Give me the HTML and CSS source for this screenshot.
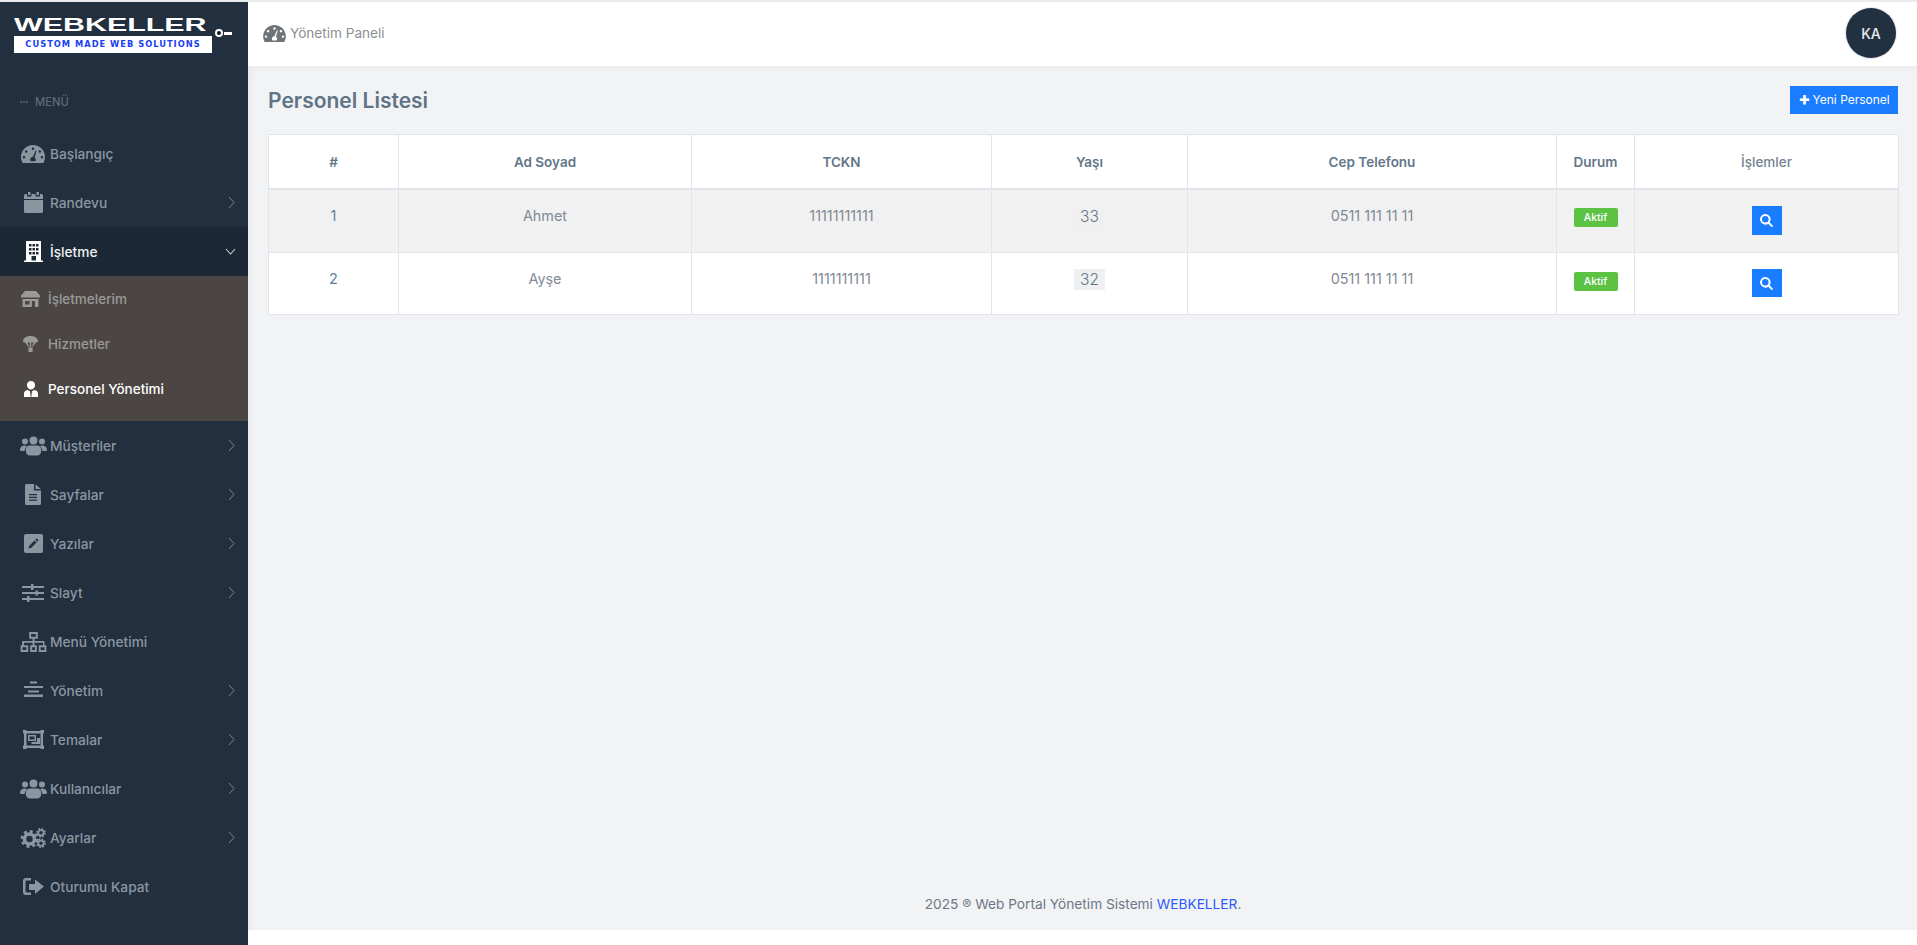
FILE: index.html
```html
<!DOCTYPE html>
<html lang="tr">
<head>
<meta charset="utf-8">
<title>Personel Listesi</title>
<link rel="stylesheet" href="styles.css">
</head>
<body>
<svg class="defs" width="0" height="0" aria-hidden="true">
  <defs>
    <symbol id="i-gauge" viewBox="0 0 24 18"><path fill-rule="evenodd" d="M12 0C5.400 0 0 5.300 0 12c0 2.200.6 4.200 1.600 6h20.800c1-1.800 1.600-3.800 1.600-6 0-6.700-5.400-12-12-12zM12 2.400a1.300 1.300 0 1 1 0 2.600 1.300 1.300 0 0 1 0-2.600zM5.200 5.200a1.300 1.300 0 1 1 0 2.600 1.300 1.300 0 0 1 0-2.600zM18.800 5.200a1.300 1.300 0 1 1 0 2.600 1.300 1.300 0 0 1 0-2.600zM3 11a1.300 1.300 0 1 1 0 2.600A1.300 1.300 0 0 1 3 11zM21 11a1.300 1.300 0 1 1 0 2.600 1.300 1.300 0 0 1 0-2.600zM14.600 5.500l.9.300-1.900 6.600c.7.500 1.200 1.300 1.200 2.200 0 .7-.3 1.300-.7 1.700H9.900c-.4-.4-.7-1-.7-1.700 0-1.500 1.200-2.700 2.700-2.800z"/></symbol>
    <symbol id="i-calendar" viewBox="0 0 19 21"><path d="M4 0h2.500v3H4zM12.500 0H15v3h-2.500zM1.500 2H3v2.500h4.500V2h4v2.500H16V2h1.500A1.500 1.500 0 0 1 19 3.500V7H0V3.500A1.500 1.500 0 0 1 1.500 2zM0 8h19v11.500a1.500 1.500 0 0 1-1.500 1.500h-16A1.500 1.500 0 0 1 0 19.500z"/></symbol>
    <symbol id="i-building" viewBox="0 0 19 21"><path fill-rule="evenodd" d="M2 0h15v19.500h2V21H0v-1.500h2zM5 3v2.500h2.500V3zM8.500 3v2.500H11V3zM12 3v2.500h2.500V3zM5 7v2.500h2.500V7zM8.500 7v2.500H11V7zM12 7v2.500h2.500V7zM5 11v2.500h2.500V11zM8.500 11v2.500H11V11zM12 11v2.500h2.500V11zM7.500 15v4.500H12V15z"/></symbol>
    <symbol id="i-shop" viewBox="0 0 19 16"><path fill-rule="evenodd" d="M4 0h11l4 4.500V6.500H0V4.500zM1.500 8h16v8h-3.600V10h-3v6H1.500zM4 10v3.500h4.500V10z"/></symbol>
    <symbol id="i-para" viewBox="0 0 16 17"><path fill-rule="evenodd" d="M8 0c4.400 0 8 2.300 8 5.300 0 .8-.3 1.300-.8 1.300h-.9L9.800 11.800h-.6L11.300 7H4.700l2.100 4.800h-.6L1.700 6.600H.8C.3 6.600 0 6.100 0 5.300 0 2.300 3.600 0 8 0zM7.300 7h1.400v4.800H7.300zM5.800 12.300h4.400V17H5.800z"/></symbol>
    <symbol id="i-person" viewBox="0 0 14 16"><path d="M7 0a4 4 0 0 1 4 4.500C11 6.800 9.200 8.500 7 8.500S3 6.800 3 4.500A4 4 0 0 1 7 0zM3.500 9 6 10.300 6.700 16H0v-3.500C0 10.500 1.700 9.300 3.500 9zM10.500 9c1.800.3 3.500 1.500 3.500 3.500V16H7.300L8 10.300z"/></symbol>
    <symbol id="i-users" viewBox="0 0 27 19"><path d="M13.500 0a4 4 0 1 1 0 8 4 4 0 0 1 0-8zM5 2a3 3 0 1 1 0 6 3 3 0 0 1 0-6zM22 2a3 3 0 1 1 0 6 3 3 0 0 1 0-6zM4.500 9c1 0 1.800.3 2.500.8-1.400 1.200-2.200 2.900-2.400 4.700H1.500C.6 14.500 0 14 0 13c0-2.200 2-4 4.500-4zM22.500 9C25 9 27 10.800 27 13c0 1-.6 1.500-1.500 1.500h-3.100c-.2-1.800-1-3.500-2.400-4.700.7-.5 1.500-.8 2.500-.8zM9.500 9h8c2.200 0 3.800 2 3.800 5 0 3-1.800 5-4.300 5H10c-2.500 0-4.300-2-4.300-5 0-3 1.600-5 3.800-5z"/></symbol>
    <symbol id="i-file" viewBox="0 0 16 21"><path fill-rule="evenodd" d="M1.500 0H9v6.500h7v13a1.500 1.500 0 0 1-1.500 1.500h-13A1.500 1.500 0 0 1 0 19.500v-18A1.500 1.500 0 0 1 1.500 0zM10.500.3 15.800 5h-5.300zM4 10v1.300h8V10zM4 12.700V14h8v-1.300zM4 15.400v1.300h8v-1.300z"/></symbol>
    <symbol id="i-edit" viewBox="0 0 19 19"><path fill-rule="evenodd" d="M2 0h15a2 2 0 0 1 2 2v15a2 2 0 0 1-2 2H2a2 2 0 0 1-2-2V2a2 2 0 0 1 2-2zM10.500 6.500 5 12l-.5 2.500 2.500-.5 5.500-5.500zM11.300 5.700l2 2 .7-.7a1 1 0 0 0 0-1.400l-.6-.6a1 1 0 0 0-1.400 0z"/></symbol>
    <symbol id="i-sliders" viewBox="0 0 22 18"><path d="M0 2h9V0h2.500v2H22v2H11.500v2H9V4H0zM0 8h13.500V6.500H16V8h6v2h-6v1.500h-2.500V10H0zM0 14h5v-2h2.500v2H22v2H7.500v2H5v-2H0z"/></symbol>
    <symbol id="i-sitemap" viewBox="0 0 27 21"><path fill-rule="evenodd" d="M9 0h9v7h-3.500v2.500H25V14h2v7h-8v-7h4.500v-2.800h-9V14H17v7H10v-7h2.500v-2.800h-9V14H8v7H0v-7h1.500V9.500h11V7H9zM11 2v3h5V2zM2 16v3h4v-3zM12 16v3h3v-3zM21 16v3h4v-3z"/></symbol>
    <symbol id="i-align" viewBox="0 0 19 18"><path d="M6 0h7v2H6zM0 4.500h19v2H0zM4 9h11v2H4zM0 13h19v2.500H0z"/></symbol>
    <symbol id="i-group" viewBox="0 0 21 19"><path fill-rule="evenodd" d="M0 0h3.500v1H17.500V0H21v3.500h-1v12h1V19h-3.500v-1h-14v1H0v-3.500h1v-12H0zM3.500 3.500v12h14v-12zM5 5h8v6H5zM6.500 6.500v3h5v-3zM14 8h3v6H8.500v-2H14z"/></symbol>
    <symbol id="i-cogs" viewBox="0 0 26 20">
      <g fill="none" stroke="currentColor">
        <circle cx="9" cy="11" r="5" stroke-width="3.600"/>
        <circle cx="9" cy="11" r="7.600" stroke-width="2.800" stroke-dasharray="3 2.970"/>
        <circle cx="20.500" cy="4.800" r="2.700" stroke-width="1.800"/>
        <circle cx="20.500" cy="4.800" r="4" stroke-width="1.700" stroke-dasharray="1.700 1.440"/>
        <circle cx="20.500" cy="15.200" r="2.700" stroke-width="1.800"/>
        <circle cx="20.500" cy="15.200" r="4" stroke-width="1.700" stroke-dasharray="1.700 1.440"/>
      </g>
    </symbol>
    <symbol id="i-signout" viewBox="0 0 21 17"><path d="M3 0h5v2.500H3.500a1 1 0 0 0-1 1v10a1 1 0 0 0 1 1H8V17H3a3 3 0 0 1-3-3V3a3 3 0 0 1 3-3zM12 1.500l9 7-9 7.500v-4H6V6h6z"/></symbol>
    <symbol id="i-search" viewBox="0 0 13 13"><path fill-rule="evenodd" d="M5.300 0a5.300 5.300 0 0 1 4.300 8.300l3.100 3.100a1 1 0 0 1-1.400 1.400L8.300 9.700A5.300 5.300 0 1 1 5.300 0zm0 2a3.300 3.300 0 1 0 0 6.600 3.300 3.300 0 0 0 0-6.600z"/></symbol>
  </defs>
</svg>
<div class="app">
  <aside class="sidebar">
    <div class="logo">
      <div class="logo-name">WEBKELLER</div>
      <div class="logo-tag">CUSTOM MADE WEB SOLUTIONS</div>
      <span class="logo-key"><span class="logo-ring"></span><span class="logo-bar"></span></span>
    </div>
    <div class="menu-label"><span class="dots"><i></i><i></i><i></i></span>MENÜ</div>
    <nav class="menu">
      <a class="item"><span class="ico"><svg class="g24"><use href="#i-gauge"/></svg></span><span class="lbl">Başlangıç</span></a>
      <a class="item"><span class="ico"><svg class="g19"><use href="#i-calendar"/></svg></span><span class="lbl">Randevu</span><svg class="chev" viewBox="0 0 7 13"><path d="M1 1l5 5.500-5 5.500"/></svg></a>
      <a class="item active"><span class="ico"><svg class="g19"><use href="#i-building"/></svg></span><span class="lbl">İşletme</span><svg class="chevd" viewBox="0 0 11 7"><path d="M1 1l4.500 5L10 1"/></svg></a>
      <div class="submenu">
        <a class="subitem"><span class="subico"><svg class="s19"><use href="#i-shop"/></svg></span>İşletmelerim</a>
        <a class="subitem"><span class="subico"><svg class="s16"><use href="#i-para"/></svg></span>Hizmetler</a>
        <a class="subitem current"><span class="subico"><svg class="s14"><use href="#i-person"/></svg></span>Personel Yönetimi</a>
      </div>
      <a class="item"><span class="ico"><svg class="g27"><use href="#i-users"/></svg></span><span class="lbl">Müşteriler</span><svg class="chev" viewBox="0 0 7 13"><path d="M1 1l5 5.500-5 5.500"/></svg></a>
      <a class="item"><span class="ico"><svg class="g16"><use href="#i-file"/></svg></span><span class="lbl">Sayfalar</span><svg class="chev" viewBox="0 0 7 13"><path d="M1 1l5 5.500-5 5.500"/></svg></a>
      <a class="item"><span class="ico"><svg class="g19"><use href="#i-edit"/></svg></span><span class="lbl">Yazılar</span><svg class="chev" viewBox="0 0 7 13"><path d="M1 1l5 5.500-5 5.500"/></svg></a>
      <a class="item"><span class="ico"><svg class="g22"><use href="#i-sliders"/></svg></span><span class="lbl">Slayt</span><svg class="chev" viewBox="0 0 7 13"><path d="M1 1l5 5.500-5 5.500"/></svg></a>
      <a class="item"><span class="ico"><svg class="g27"><use href="#i-sitemap"/></svg></span><span class="lbl">Menü Yönetimi</span></a>
      <a class="item"><span class="ico"><svg class="g19"><use href="#i-align"/></svg></span><span class="lbl">Yönetim</span><svg class="chev" viewBox="0 0 7 13"><path d="M1 1l5 5.500-5 5.500"/></svg></a>
      <a class="item"><span class="ico"><svg class="g21"><use href="#i-group"/></svg></span><span class="lbl">Temalar</span><svg class="chev" viewBox="0 0 7 13"><path d="M1 1l5 5.500-5 5.500"/></svg></a>
      <a class="item"><span class="ico"><svg class="g27"><use href="#i-users"/></svg></span><span class="lbl">Kullanıcılar</span><svg class="chev" viewBox="0 0 7 13"><path d="M1 1l5 5.500-5 5.500"/></svg></a>
      <a class="item"><span class="ico"><svg class="g27"><use href="#i-cogs"/></svg></span><span class="lbl">Ayarlar</span><svg class="chev" viewBox="0 0 7 13"><path d="M1 1l5 5.500-5 5.500"/></svg></a>
      <a class="item"><span class="ico"><svg class="g21"><use href="#i-signout"/></svg></span><span class="lbl">Oturumu Kapat</span></a>
    </nav>
  </aside>
  <div class="main">
    <header class="topbar">
      <div class="crumb"><svg class="crumb-ico"><use href="#i-gauge"/></svg><span>Yönetim Paneli</span></div>
      <div class="avatar">KA</div>
    </header>
    <main class="content">
      <div class="title-row">
        <h1>Personel Listesi</h1>
        <a class="new-btn"><span class="plus">+</span>Yeni Personel</a>
      </div>
      <table class="grid">
        <colgroup><col class="c1"><col class="c2"><col class="c3"><col class="c4"><col class="c5"><col class="c6"><col class="c7"></colgroup>
        <thead>
          <tr><th>#</th><th>Ad Soyad</th><th>TCKN</th><th>Yaşı</th><th>Cep Telefonu</th><th>Durum</th><th class="light">İşlemler</th></tr>
        </thead>
        <tbody>
          <tr class="odd"><td class="num">1</td><td>Ahmet</td><td>11111111111</td><td><code>33</code></td><td>0511 111 11 11</td><td><span class="badge">Aktif</span></td><td><a class="view"><svg><use href="#i-search"/></svg></a></td></tr>
          <tr class="even"><td class="num">2</td><td>Ayşe</td><td>1111111111</td><td><code>32</code></td><td>0511 111 11 11</td><td><span class="badge">Aktif</span></td><td><a class="view"><svg><use href="#i-search"/></svg></a></td></tr>
        </tbody>
      </table>
      <footer class="foot">2025 ® Web Portal Yönetim Sistemi <a>WEBKELLER</a>.</footer>
    </main>
  </div>
</div>
</body>
</html>
```
FILE: styles.css
```css
* { box-sizing: border-box; }
html, body { margin: 0; height: 100%; }
body { font-family: Inter, "Liberation Sans", sans-serif; background: #fff; color: #67757c; overflow: hidden; }
.defs { position: absolute; }
.app { display: flex; height: 945px; border-top: 2px solid #e8eaec; }
.sidebar { width: 248px; flex: none; background: #212f3f; }
.logo { position: relative; height: 64px; padding: 15px 0 0 14px; }
.logo-name { width: 198px; height: 16px; color: #fff; font: 700 19px/16px "Liberation Sans", sans-serif; transform-origin: 0 50%; transform: scaleX(1.6); white-space: nowrap; }
.logo-tag { width: 198px; height: 17px; margin-top: 3px; background: #fff; color: #1a3ff0; font: 700 8.300px/17px "DejaVu Sans", sans-serif; letter-spacing: 1px; text-align: center; white-space: nowrap; }
.logo-key { position: absolute; left: 215px; top: 27px; display: flex; align-items: center; }
.logo-ring { width: 8px; height: 8px; border: 2px solid #fff; border-radius: 50%; background: #10161d; }
.logo-bar { width: 8px; height: 3px; background: #fff; margin-left: 1px; }
.menu-label { display: flex; align-items: center; height: 63px; padding: 9px 0 0 20px; font-size: 11.200px; font-weight: 500; line-height: 18px; color: #5e6a76; }
.dots { display: flex; gap: 1px; margin-right: 7px; }
.dots i { width: 2px; height: 2px; border-radius: 50%; background: #5e6a76; }
.menu { display: flex; flex-direction: column; }
.item { display: flex; align-items: center; height: 49px; padding-left: 18px; padding-right: 13px; color: #8c96a1; font-size: 13.700px; font-weight: 500; }
.item svg { fill: #8c96a1; }
.ico { width: 30px; margin-right: 2px; display: flex; justify-content: center; align-items: center; }
.lbl { flex: 1; }
.g16 { width: 16px; height: 21px; }
.g19 { width: 19px; height: 21px; }
.g21 { width: 21px; height: 19px; }
.g22 { width: 22px; height: 18px; }
.g24 { width: 24px; height: 18px; }
.g27 { width: 27px; height: 20px; }
.chev { width: 7px; height: 13px; fill: none !important; stroke: #79848f; stroke-width: 1; }
.chevd { width: 11px; height: 7px; margin-right: -1px; fill: none !important; stroke: #c8cdd2; stroke-width: 1.100; }
.item.active { background: #1c2836; color: #f0f1f3; }
.item.active .ico svg { fill: #fff; }
.submenu { height: 145px; background: #4b4644; display: flex; flex-direction: column; }
.subitem { display: flex; align-items: center; height: 45px; padding-left: 21px; color: #9a9a99; font-size: 13.500px; font-weight: 500; }
.subitem.current { color: #fff; }
.subico { width: 19px; margin-right: 8px; display: flex; justify-content: center; }
.subico svg { fill: #9a9a99; }
.subitem.current svg { fill: #fff; }
.s19 { width: 19px; height: 16px; }
.s16 { width: 15px; height: 16px; }
.s14 { width: 14px; height: 16px; }
.main { flex: 1; min-width: 0; display: flex; flex-direction: column; }
.topbar { height: 64px; flex: none; background: #fff; display: flex; align-items: center; justify-content: space-between; padding: 0 21px 2px 15px; }
.crumb { display: flex; align-items: center; gap: 4px; font-size: 13.600px; color: #8b8f93; }
.crumb-ico { width: 23px; height: 17px; fill: #6f7479; }
.avatar { width: 50px; height: 50px; border-radius: 50%; background: #213142; color: #e9ecef; font-size: 14px; font-weight: 500; display: flex; align-items: center; justify-content: center; box-shadow: 0 0 2px rgba(0,0,0,.3); }
.content { height: 864px; flex: none; background: #f2f3f5; padding: 20px 19px 0 20px; display: flex; flex-direction: column; box-shadow: inset 10px 8px 10px -8px rgba(0,0,0,.05); }
.title-row { display: flex; justify-content: space-between; align-items: flex-start; height: 48px; }
h1 { margin: 3px 0 0; font-size: 21px; line-height: 24px; font-weight: 600; color: #5f7387; }
.new-btn { width: 108px; height: 28px; background: #1a7dff; color: #fff; font-size: 12px; line-height: 28px; text-align: center; white-space: nowrap; }
.plus { font-weight: 800; font-size: 18px; margin-right: 2px; line-height: 16px; vertical-align: -1px; }
.grid { width: 1630px; table-layout: fixed; border-collapse: collapse; background: #fff; border: 1px solid #e1e5e9; }
.c1 { width: 130px; } .c2 { width: 293px; } .c3 { width: 300px; } .c4 { width: 196px; } .c5 { width: 369px; } .c6 { width: 78px; } .c7 { width: 264px; }
th, td { border: 1px solid #e1e5e9; text-align: center; vertical-align: top; }
th { height: 54px; padding: 18px 4px 0; font-size: 13.500px; font-weight: 600; line-height: 18px; color: #63768a; border-bottom-width: 2px; }
th.light { font-weight: 500; color: #75828f; }
td { padding: 17px 4px 0; font-size: 14.400px; line-height: 18px; color: #7f8a95; }
.odd td { background: #f1f1f2; height: 64px; }
.even td { height: 62px; }
td.num { color: #5f7f99; }
code { display: inline-block; width: 31px; height: 21px; margin-top: -1px; background: #eff0f1; color: #64778a; font-family: Inter, sans-serif; font-size: 15.500px; font-weight: 300; line-height: 21px; }
.odd code { height: 22px; background: #f0f0f0; }
.badge { display: inline-block; width: 44px; height: 19px; margin-top: 2px; background: #5bc244; color: #fff; border-radius: 2px; font-size: 10.500px; font-weight: 500; line-height: 19px; }
.odd .badge { margin-top: 1px; }
.view { display: inline-flex; width: 30px; height: 28px; margin-top: -1px; background: #1a7dff; align-items: center; justify-content: center; }
.odd .view { height: 29px; }
.view svg { width: 13px; height: 13px; fill: #fff; }
.foot { margin-top: auto; height: 35px; text-align: center; font-size: 13.700px; line-height: 18px; color: #6c7886; }
.foot a { color: #2b5cff; }
.item .g27 { color: #8c96a1; }
```
